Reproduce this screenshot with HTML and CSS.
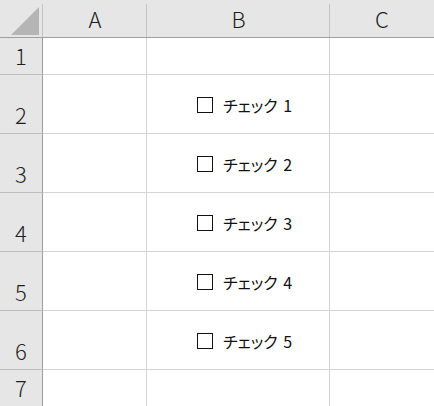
FILE: index.html
```html
<!DOCTYPE html>
<html lang="ja">
<head>
<meta charset="utf-8">
<title>Sheet</title>
<link rel="stylesheet" href="styles.css">
</head>
<body>
<div class="sheet">
  <div class="corner">
    <svg class="tri" width="43" height="37" viewBox="0 0 43 37"><polygon points="11,35 39,35 39,7" fill="#b5b5b5"/></svg>
  </div>
  <div class="colhead">A</div>
  <div class="colhead">B</div>
  <div class="colhead last">C</div>

  <div class="rowhead">1</div>
  <div class="cell"></div>
  <div class="cell"></div>
  <div class="cell last"></div>

  <div class="rowhead">2</div>
  <div class="cell"></div>
  <div class="cell chk"><span class="box"></span><span class="label">チェック 1</span></div>
  <div class="cell last"></div>

  <div class="rowhead">3</div>
  <div class="cell"></div>
  <div class="cell chk"><span class="box"></span><span class="label">チェック 2</span></div>
  <div class="cell last"></div>

  <div class="rowhead">4</div>
  <div class="cell"></div>
  <div class="cell chk"><span class="box"></span><span class="label">チェック 3</span></div>
  <div class="cell last"></div>

  <div class="rowhead">5</div>
  <div class="cell"></div>
  <div class="cell chk"><span class="box"></span><span class="label">チェック 4</span></div>
  <div class="cell last"></div>

  <div class="rowhead">6</div>
  <div class="cell"></div>
  <div class="cell chk"><span class="box"></span><span class="label">チェック 5</span></div>
  <div class="cell last"></div>

  <div class="rowhead end">7</div>
  <div class="cell end"></div>
  <div class="cell end"></div>
  <div class="cell last end"></div>
</div>
</body>
</html>
```

FILE: styles.css
```css
html, body {
  margin: 0;
  padding: 0;
  background: #ffffff;
}

.sheet {
  display: grid;
  grid-template-columns: 43px 104px 183px 104px;
  grid-template-rows: 38px 37px 59px 59px 59px 59px 59px 36px;
  width: 434px;
  height: 406px;
  overflow: hidden;
  font-family: "Noto Sans CJK JP", "Noto Sans", sans-serif;
  color: #1e1e1e;
}

.sheet > div {
  box-sizing: border-box;
}

.corner,
.colhead {
  background:
    linear-gradient(#c4c4c4, #c4c4c4) right 0 bottom 0 / 1px calc(100% - 4px) no-repeat,
    #e6e6e6;
  border-bottom: 1px solid #9e9e9e;
}

.corner {
  display: flex;
}

.tri {
  display: block;
}

.colhead {
  display: flex;
  justify-content: center;
  align-items: flex-end;
  padding-bottom: 8px;
  font-size: 22px;
  line-height: 22px;
  font-weight: 300;
}

.colhead.last {
  background: #e6e6e6;
}

.rowhead {
  display: flex;
  justify-content: center;
  align-items: flex-end;
  padding-bottom: 8px;
  background: #e6e6e6;
  border-right: 1px solid #9e9e9e;
  border-bottom: 1px solid #bdbdbd;
  font-size: 22px;
  line-height: 22px;
  font-weight: 300;
}

.cell {
  border-right: 1px solid #d4d4d4;
  border-bottom: 1px solid #d4d4d4;
}

.cell.last {
  border-right: none;
}

.end {
  border-bottom: none;
}

.chk {
  display: flex;
  align-items: center;
  padding-left: 50px;
  padding-top: 2px;
}

.box {
  width: 16px;
  height: 16px;
  box-sizing: border-box;
  border: 1px solid #111;
  flex: none;
}

.label {
  margin-left: 10px;
  font-size: 16px;
  line-height: 16px;
  font-feature-settings: "palt";
  word-spacing: 2px;
  color: #111;
}
```
